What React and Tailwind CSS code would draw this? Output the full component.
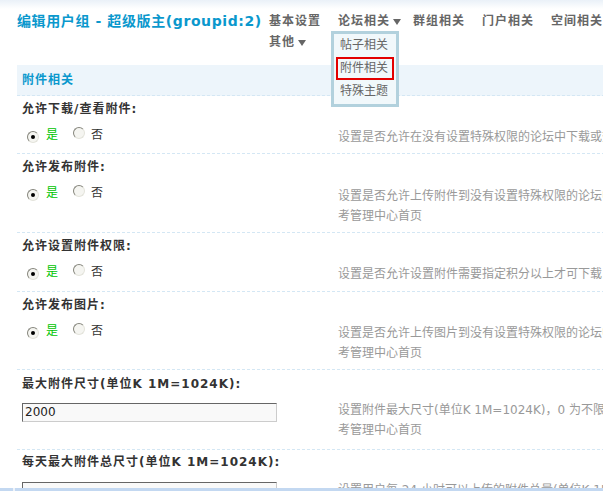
import React from "react";

const navItems = [
    { text: "基本设置", arrow: false, gap: "mr-[17px]" },
    { text: "论坛相关", arrow: true, gap: "mr-[12px]", menu: true },
    { text: "群组相关", arrow: false, gap: "mr-[17px]" },
    { text: "门户相关", arrow: false, gap: "mr-[17px]" },
    { text: "空间相关", arrow: false, gap: "mr-[17px]" },
    { text: "其他", arrow: true, gap: "mr-[17px]" },
];

const menuItems = [
    { text: "帖子相关", active: false },
    { text: "附件相关", active: true },
    { text: "特殊主题", active: false },
];

const rows = [
    {
        label: "允许下载/查看附件:",
        type: "radio",
        desc: ["设置是否允许在没有设置特殊权限的论坛中下载或查看附件"],
        labelPad: "pt-[4px]",
        ctrlPad: "pt-[9px]",
        descPad: "pt-[9px] pb-[6px]",
    },
    {
        label: "允许发布附件:",
        type: "radio",
        desc: ["设置是否允许上传附件到没有设置特殊权限的论坛中。需要PHP设置支持，请参", "考管理中心首页"],
        labelPad: "pt-[4px]",
        ctrlPad: "pt-[9px]",
        descPad: "pt-[10px] pb-[6px]",
    },
    {
        label: "允许设置附件权限:",
        type: "radio",
        desc: ["设置是否允许设置附件需要指定积分以上才可下载"],
        labelPad: "pt-[4px]",
        ctrlPad: "pt-[9px]",
        descPad: "pt-[9px] pb-[7px]",
    },
    {
        label: "允许发布图片:",
        type: "radio",
        desc: ["设置是否允许上传图片到没有设置特殊权限的论坛中。需要PHP设置支持，请参", "考管理中心首页"],
        labelPad: "pt-[4px]",
        ctrlPad: "pt-[9px]",
        descPad: "pt-[9px] pb-[6px]",
    },
    {
        label: "最大附件尺寸(单位K 1M=1024K):",
        type: "input",
        value: "2000",
        desc: ["设置附件最大尺寸(单位K 1M=1024K)，0 为不限制，需要 PHP 设置支持，请参", "考管理中心首页"],
        labelPad: "pt-[5px]",
        ctrlPad: "pt-[10px]",
        descPad: "pt-[7px] pb-[9px]",
    },
    {
        label: "每天最大附件总尺寸(单位K 1M=1024K):",
        type: "input",
        value: "",
        desc: ["设置用户每 24 小时可以上传的附件总量(单位K 1M=1024K)，0 为不限制"],
        labelPad: "pt-[3px]",
        ctrlPad: "pt-[11px]",
        descPad: "pt-[9px] pb-[6px]",
    },
];

const Arrow = () => (
    <svg width="8" height="6" viewBox="0 0 8 6" className="ml-[3px] mt-[1px]">
        <polygon points="0,0 8,0 4,6" fill="#666" />
    </svg>
);

const Radio = ({ checked }) => (
    <span className="relative inline-flex h-[12px] w-[12px] items-center justify-center rounded-full border border-t-[#85857c] border-l-[#85857c] border-r-[#e3e3db] border-b-[#e3e3db] bg-[#f5f5f1]">
        {checked && <span className="h-[4px] w-[4px] rounded-full bg-black" />}
    </span>
);

const Row = ({ row }) => (
    <div className="border-b border-dashed border-[#d4e7f4]">
        <div className={`pl-[5px] ${row.labelPad} text-[12px] font-bold leading-[18px] tracking-[1px] text-[#333] whitespace-nowrap`}>
            {row.label}
        </div>
        <div className="grid grid-cols-[316px_1fr]">
            <div className={`pl-[5px] ${row.ctrlPad}`}>
                {row.type === "radio" ? (
                    <div className="flex items-center text-[12px] leading-[16px]">
                        <span className="ml-[5px]"><Radio checked /></span>
                        <span className="ml-[7px] text-[#00c400]">是</span>
                        <span className="ml-[15px]"><Radio /></span>
                        <span className="ml-[6px] text-[#333]">否</span>
                    </div>
                ) : (
                    <div className="h-[19px] w-[255px] border border-t-[#666] border-l-[#666] border-r-[#ccc] border-b-[#ccc] bg-[#f9f9f9] pl-[2px] text-[12px] leading-[17px] text-[#222]">
                        {row.value}
                    </div>
                )}
            </div>
            <div className={`pl-[5px] ${row.descPad} text-[12px] leading-[20px] text-[#999] whitespace-nowrap`}>
                {row.desc.map((line, i) => (
                    <div key={i}>{line}</div>
                ))}
            </div>
        </div>
    </div>
);

const App = () => {
    return (
        <div className="flex h-[491px] w-[603px] flex-col overflow-hidden bg-[linear-gradient(to_bottom,#eaf1f8,#ffffff_9px)] font-['DejaVu_Sans','Noto_Sans_CJK_SC',sans-serif]">
            <div className="flex-1 overflow-hidden">
                <div className="w-[900px]">
                    {/* 标题 + 顶部导航 */}
                    <div className="flex items-start pl-[17px] pt-[11px]">
                        <h3 className="w-[252px] shrink-0 whitespace-nowrap text-[14px] font-bold leading-[21px] tracking-[0.6px] text-[#0a98cd]">
                            编辑用户组 - 超级版主(groupid:2)
                        </h3>
                        <ul className="flex w-[360px] flex-wrap">
                            {navItems.map((item) => (
                                <li key={item.text} className={`relative flex items-center ${item.gap} text-[12px] font-bold leading-[21px] tracking-[1px] text-[#666] whitespace-nowrap`}>
                                    {item.text}
                                    {item.arrow && <Arrow />}
                                    {item.menu && (
                                        <div className="absolute left-[-7px] top-[20px] z-10 w-[68px] border-[3px] border-[#b2d1dd] bg-[#f1f8fb] pb-[1px]">
                                            {menuItems.map((m) => (
                                                <div
                                                    key={m.text}
                                                    className={`mx-[2px] h-[23px] border-2 px-[2px] text-[12px] font-normal leading-[19px] tracking-normal text-[#666] ${m.active ? "border-[#e30000]" : "border-transparent"}`}
                                                >
                                                    {m.text}
                                                </div>
                                            ))}
                                        </div>
                                    )}
                                </li>
                            ))}
                        </ul>
                    </div>

                    {/* 附件相关 */}
                    <div className="ml-[17px] mt-[12px]">
                        <div className="h-[31px] border-b border-dashed border-[#d4e7f4] bg-[#edf5fb] pl-[5px] text-[12px] font-bold leading-[30px] tracking-[1px] text-[#0a98cd]">
                            附件相关
                        </div>
                        {rows.map((row) => (
                            <Row key={row.label} row={row} />
                        ))}
                    </div>
                </div>
            </div>
            <div className="flex h-[3px] shrink-0">
                <div className="w-[13px] bg-[#c3d8f1]" />
                <div className="w-[2px] bg-[#eef3fa]" />
                <div className="flex-1 bg-[#c3d8f1]" />
            </div>
        </div>
    );
};

export default App;
